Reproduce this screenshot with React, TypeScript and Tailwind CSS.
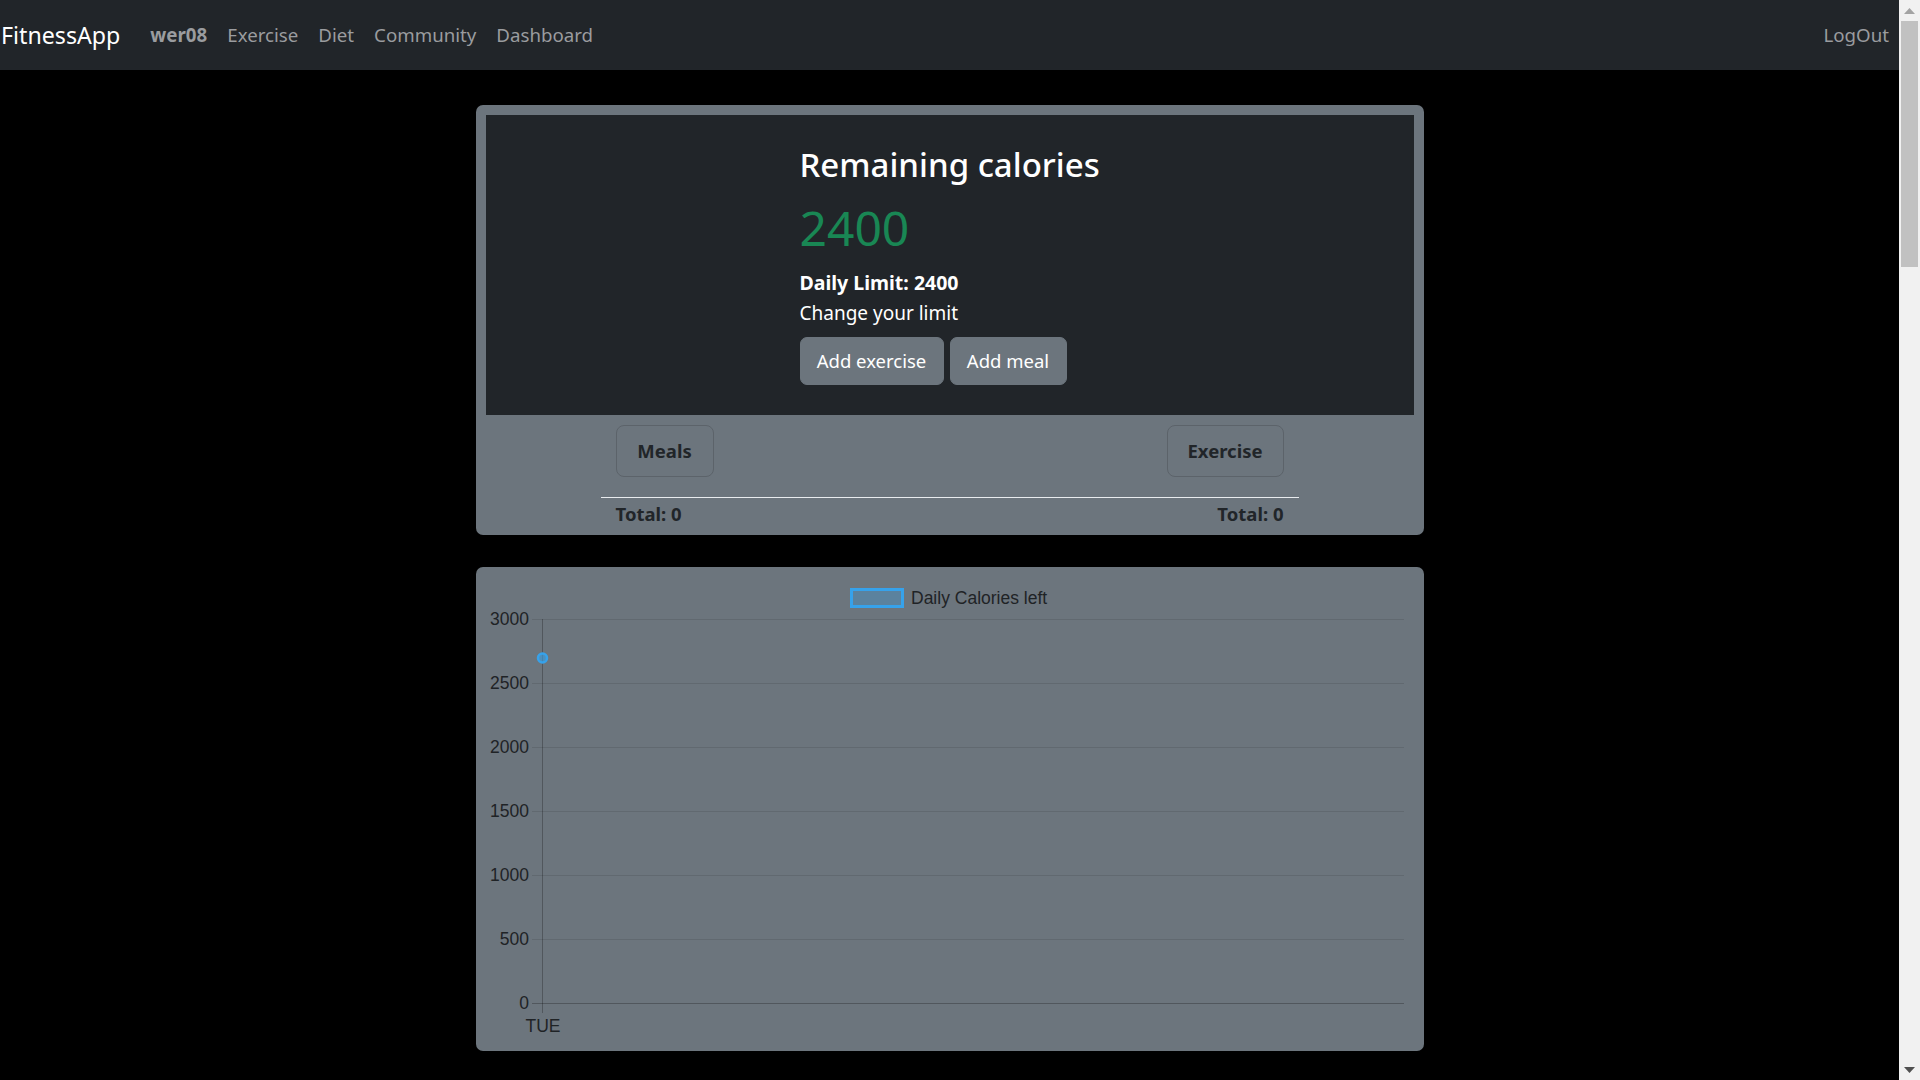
import React from "react";

const FONT = { fontFamily: '"Noto Sans", "Open Sans", sans-serif' };

function Navbar() {
  return (
    <nav className="h-[70px] bg-[#212529] flex items-center" style={FONT}>
      <a className="text-white text-[23.2px] mr-[20px] leading-[36px] pl-[1px]">FitnessApp</a>
      <div className="flex items-center text-[18.7px] text-[#9a9c9f] leading-[30px]">
        <a className="px-[10px] font-bold">wer08</a>
        <a className="px-[10px]">Exercise</a>
        <a className="px-[10px]">Diet</a>
        <a className="px-[10px]">Community</a>
        <a className="px-[10px]">Dashboard</a>
      </div>
      <a className="ml-auto px-[10px] text-[18.7px] text-[#9a9c9f] leading-[30px]">LogOut</a>
    </nav>
  );
}

function SummaryCard() {
  return (
    <div className="w-[948px] mx-auto bg-[#6c757d] rounded-[7px] pt-[10px] px-[10px] pb-[6px]" style={FONT}>
      <div className="h-[300px] bg-[#212529] pt-[26px]">
        <div className="w-[300px] mx-auto text-white">
          <h2 className="text-[33px] font-medium leading-[48px] mb-[9px] whitespace-nowrap">Remaining calories</h2>
          <div className="text-[48px] leading-[60px] mb-[10px] text-[#198754]">2400</div>
          <div className="text-[19.5px] leading-[30px] font-bold">Daily Limit: 2400</div>
          <div className="text-[19px] leading-[30px]">Change your limit</div>
          <div className="flex gap-[6px] mt-[9px]">
            <button className="w-[144px] h-[48px] bg-[#6c757d] border border-[#6c757d] rounded-[7px] text-[18.5px] text-white">
              Add exercise
            </button>
            <button className="w-[117px] h-[48px] bg-[#6c757d] border border-[#6c757d] rounded-[7px] text-[18.5px] text-white">
              Add meal
            </button>
          </div>
        </div>
      </div>
      <div className="w-[698px] mx-auto mt-[10px]">
        <div className="flex justify-between px-[15px]">
          <button className="w-[98px] h-[52px] border border-[#5c636a] rounded-[8px] text-[18.5px] font-bold text-[#212529]">
            Meals
          </button>
          <button className="w-[117px] h-[52px] border border-[#5c636a] rounded-[8px] text-[18.5px] font-bold text-[#212529]">
            Exercise
          </button>
        </div>
        <div className="mt-[20px] h-px bg-[#e9ecef]" />
        <div className="mt-px h-[30px] flex justify-between items-center px-[15px] text-[18.5px] font-bold text-[#212529]">
          <span>Total: 0</span>
          <span>Total: 0</span>
        </div>
      </div>
    </div>
  );
}

function ChartCard() {
  const grid = [
    { y: 52, label: "3000" },
    { y: 116, label: "2500" },
    { y: 180, label: "2000" },
    { y: 244, label: "1500" },
    { y: 308, label: "1000" },
    { y: 372, label: "500" },
    { y: 436, label: "0" },
  ];
  return (
    <div className="w-[948px] h-[484px] mx-auto bg-[#6c757d] rounded-[7px] mt-[32px]">
      <svg width="948" height="484" viewBox="0 0 948 484" style={{ fontFamily: '"Liberation Sans", Arial, sans-serif' }}>
        <rect x="375.5" y="22.5" width="51" height="17" fill="rgba(54,162,235,0.3)" stroke="rgb(54,162,235)" strokeWidth="3" />
        <text x="435" y="31" fontSize="17.5" fill="#1f2326" dominantBaseline="central">
          Daily Calories left
        </text>
        {grid.map((g, i) => (
          <g key={g.label}>
            <line
              x1="56"
              x2="928"
              y1={g.y + 0.5}
              y2={g.y + 0.5}
              stroke={i === grid.length - 1 ? "rgba(0,0,0,0.25)" : "rgba(0,0,0,0.1)"}
              strokeWidth="1"
            />
            <text x="53" y={g.y} fontSize="17.5" fill="#1f2326" textAnchor="end" dominantBaseline="central">
              {g.label}
            </text>
          </g>
        ))}
        <line x1="66.5" x2="66.5" y1="52" y2="446" stroke="rgba(0,0,0,0.25)" strokeWidth="1" />
        <text x="67" y="459" fontSize="17.5" fill="#1f2326" textAnchor="middle" dominantBaseline="central">
          TUE
        </text>
        <circle cx="66.5" cy="91" r="4.5" fill="rgba(54,162,235,0.6)" stroke="rgb(54,162,235)" strokeWidth="2.5" />
      </svg>
    </div>
  );
}

function Scrollbar() {
  return (
    <aside className="w-[21px] h-[1080px] bg-[#f1f1f1] flex flex-col shrink-0">
      <div className="h-[21px] flex items-center justify-center">
        <svg width="11" height="6" viewBox="0 0 11 6">
          <polygon points="5.5,0 11,6 0,6" fill="#a3a3a3" />
        </svg>
      </div>
      <div className="flex-1 px-[2px]">
        <div className="h-[246px] bg-[#c1c1c1]" />
      </div>
      <div className="h-[21px] flex items-center justify-center">
        <svg width="11" height="6" viewBox="0 0 11 6">
          <polygon points="0,0 11,0 5.5,6" fill="#505050" />
        </svg>
      </div>
    </aside>
  );
}

export default function App() {
  return (
    <div className="bg-black flex">
      <div className="flex-1 min-w-0 h-[1080px] overflow-hidden">
        <Navbar />
        <main className="pt-[35px]">
          <SummaryCard />
          <ChartCard />
        </main>
      </div>
      <Scrollbar />
    </div>
  );
}
